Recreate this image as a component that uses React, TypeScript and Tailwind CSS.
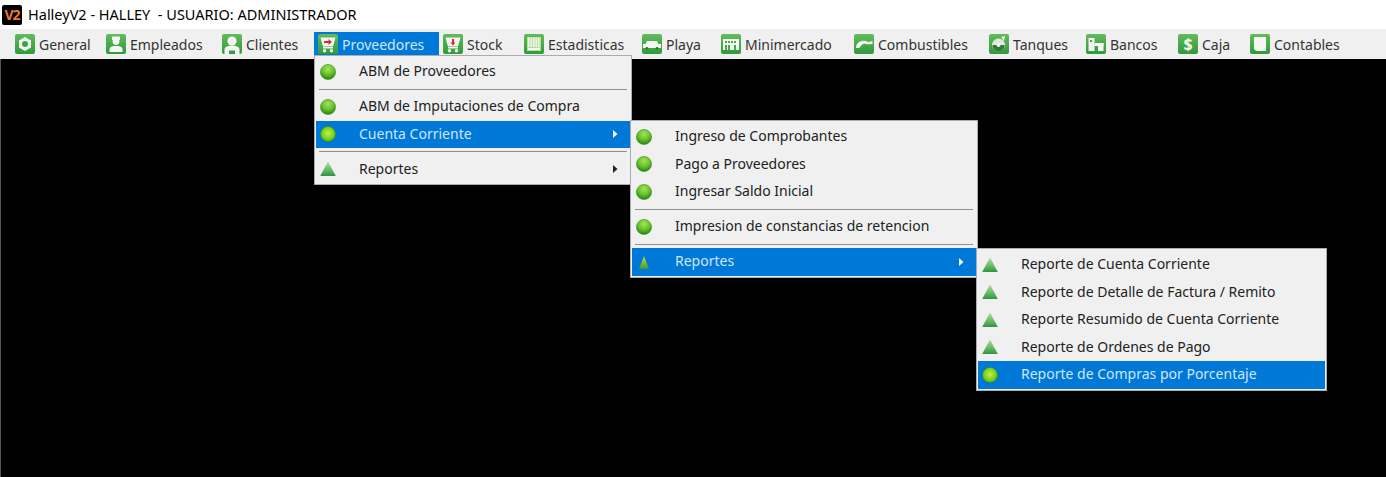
const F = "[font-family:'Noto_Sans','Open_Sans',sans-serif]";

function Ball({ active = false }: { active?: boolean }) {
  const id = active ? "ballA" : "ballN";
  return (
    <svg width="16" height="16" viewBox="0 0 16 16" className="shrink-0">
      <defs>
        <radialGradient id={id} cx="50%" cy={active ? "45%" : "30%"} r="65%">
          <stop offset="0%" stopColor={active ? "#c4f04a" : "#a4e25a"} />
          <stop offset="55%" stopColor={active ? "#7ed321" : "#6cc52c"} />
          <stop offset="100%" stopColor={active ? "#3f9f14" : "#2f8a18"} />
        </radialGradient>
      </defs>
      <ellipse cx="8" cy="8" rx="7.6" ry="7.6" fill={`url(#${id})`} stroke={active ? "#2f8f1d" : "#3b9225"} strokeWidth="0.6" />
    </svg>
  );
}

function Tri({ active = false }: { active?: boolean }) {
  const id = active ? "triA" : "triN";
  return (
    <svg width="16" height="16" viewBox="0 0 16 16" className="shrink-0">
      <defs>
        <linearGradient id={id} x1="0" y1="0" x2="0" y2="1">
          <stop offset="0%" stopColor={active ? "#c9dc4c" : "#b4dca6"} />
          <stop offset="55%" stopColor={active ? "#79b83a" : "#6cbc66"} />
          <stop offset="100%" stopColor={active ? "#3c9a3a" : "#2f9445"} />
        </linearGradient>
      </defs>
      {active ? (
        <path d="M8 2 L13 15 L3 15 Z" fill={`url(#${id})`} />
      ) : (
        <path d="M8 0.5 L15.8 15 L0.2 15 Z" fill={`url(#${id})`} />
      )}
    </svg>
  );
}

const W = "#f4f6f2";

function Glyph({ name }: { name: string }) {
  switch (name) {
    case "general":
      return (
        <>
          <path d="M10 3 L16 6.5 V13.5 L10 17 L4 13.5 V6.5 Z" fill={W} />
          <circle cx="10" cy="10" r="3" fill="#3ea53e" />
        </>
      );
    case "empleados":
      return (
        <>
          <path d="M6 2.5 H14 V6 H6 Z" fill={W} />
          <circle cx="10" cy="7.5" r="3.4" fill={W} />
          <path d="M3.5 18 V15 C3.5 12.5 7 12 10 12 C13 12 16.5 12.5 16.5 15 V18 Z" fill={W} />
        </>
      );
    case "clientes":
      return (
        <>
          <circle cx="10" cy="7" r="4.6" fill={W} />
          <path d="M2.5 20 V15.5 C2.5 12.5 6.5 11.5 10 11.5 C13.5 11.5 17.5 12.5 17.5 15.5 V20 H13 V16.5 H7 V20 Z" fill={W} />
        </>
      );
    case "prov":
    case "stock":
      return (
        <>
          <path d="M2.5 3.5 H17.5 L15 12.5 H5 Z" fill={W} />
          <rect x="5" y="13" width="10" height="1.5" fill={W} />
          <circle cx="6.5" cy="16.8" r="1.7" fill={W} />
          <circle cx="13.5" cy="16.8" r="1.7" fill={W} />
          {name === "prov" ? (
            <path d="M6 7 H10.5 V5 L14 8 L10.5 11 V9 H6 Z" fill="#e02a2a" />
          ) : (
            <path d="M10 11.5 L7.5 8.5 H9 V5 H11 V8.5 H12.5 Z" fill="#e02a2a" />
          )}
        </>
      );
    case "estad":
      return (
        <>
          <rect x="3" y="3" width="14" height="14" fill="#b6dea0" />
          {[4, 6.5, 9, 11.5, 14].map((x) => (
            <rect key={x} x={x} y="3.5" width="1.4" height="9.5" fill={W} />
          ))}
          <rect x="4" y="14" width="12" height="2" fill={W} />
        </>
      );
    case "playa":
      return (
        <>
          <path d="M5 7 H15 L16.5 10 H19 V14 H1 V10 H3.5 Z" fill={W} />
          <circle cx="5" cy="14.5" r="1.4" fill="#2f7a2f" />
          <circle cx="15" cy="14.5" r="1.4" fill="#2f7a2f" />
        </>
      );
    case "mini":
      return (
        <>
          <rect x="2" y="5" width="16" height="11" fill={W} />
          {[4, 7, 10, 13].map((x) => (
            <rect key={x} x={x} y="7" width="2" height="2" fill="#4aa84a" />
          ))}
          {[4, 7, 13].map((x) => (
            <rect key={x} x={x} y="11" width="2" height="5" fill="#4aa84a" />
          ))}
        </>
      );
    case "comb":
      return <path d="M2 13 C3 7 10 5.5 14 8 L18.5 7 V10 L14 10.5 C11 9 8 10 7 12 L5 14 H2 Z" fill={W} />;
    case "tanq":
      return (
        <>
          <circle cx="9.5" cy="11" r="6.5" fill="#dfe9da" />
          <path d="M3.5 11 H15.5 C15.5 15 12.5 17.5 9.5 17.5 C6.5 17.5 3.5 15 3.5 11 Z" fill="#2f7a3a" />
          <circle cx="9.5" cy="11" r="2" fill={W} />
          <path d="M12 3 L16 2 L15 7 Z" fill={W} />
        </>
      );
    case "bancos":
      return (
        <>
          <rect x="2.5" y="4" width="6" height="13" fill={W} />
          <rect x="8.5" y="9" width="9" height="3" fill={W} />
          <rect x="12" y="9" width="5.5" height="8" fill={W} />
          <rect x="4" y="6" width="2" height="2" fill="#4aa84a" />
        </>
      );
    case "caja":
      return null;
    default:
      return <path d="M4 3 H16 V17 H6 L4 15 Z" fill={W} />;
  }
}

function Tile({ name }: { name: string }) {
  const gid = "tileG";
  return (
    <svg width="20" height="20" viewBox="0 0 20 20" className="shrink-0">
      <defs>
        <linearGradient id={gid} x1="0" y1="0" x2="0" y2="1">
          <stop offset="0%" stopColor="#63bb5c" />
          <stop offset="100%" stopColor="#2f9a3c" />
        </linearGradient>
      </defs>
      <rect width="20" height="20" rx="2" fill={`url(#${gid})`} />
      <Glyph name={name} />
    </svg>
  );
}

const bar = [
  { n: "general", t: "General", w: "w-[91px]" },
  { n: "empleados", t: "Empleados", w: "w-[116px]" },
  { n: "clientes", t: "Clientes", w: "w-[96px]" },
  { n: "prov", t: "Proveedores", w: "w-[125px]", on: true },
  { n: "stock", t: "Stock", w: "w-[81px]" },
  { n: "estad", t: "Estadisticas", w: "w-[118px]" },
  { n: "playa", t: "Playa", w: "w-[79px]" },
  { n: "mini", t: "Minimercado", w: "w-[133px]" },
  { n: "comb", t: "Combustibles", w: "w-[135px]" },
  { n: "tanq", t: "Tanques", w: "w-[97px]" },
  { n: "bancos", t: "Bancos", w: "w-[92px]" },
  { n: "caja", t: "Caja", w: "w-[72px]" },
  { n: "cont", t: "Contables", w: "w-[100px]" },
];

type Row = { t?: string; i?: "b" | "t"; on?: boolean; sub?: boolean };

function Menu({ rows, pos, arrow }: { rows: Row[]; pos: string; arrow: string }) {
  return (
    <div className={`absolute ${pos} bg-[#f0f0f0] border border-[#a9acb0] pt-[2px] pb-[1px] px-[1px]`}>
      {rows.map((r, k) =>
        r.t ? (
          <div
            key={k}
            className={`flex items-center h-[27.5px] ${r.on ? "bg-[#0078d7] text-[#cfe6fb]" : "text-[#222]"}`}
          >
            <span className="w-[43px] pl-[4px] flex items-center shrink-0">
              {r.i === "b" ? <Ball active={r.on} /> : <Tri active={r.on} />}
            </span>
            <span className="whitespace-nowrap mt-[-2px]">{r.t}</span>
            {r.sub && (
              <svg width="6" height="10" viewBox="0 0 6 10" className={`ml-auto ${arrow}`}>
                <path d="M1 1 L5.5 5 L1 9 Z" fill={r.on ? "#f4f8fc" : "#222"} />
              </svg>
            )}
          </div>
        ) : (
          <div key={k} className="h-[7.5px] flex items-center px-[3px]">
            <div className="h-px w-full bg-[#8f8f8f]" />
          </div>
        )
      )}
    </div>
  );
}

export default function App() {
  return (
    <div className={`relative flex flex-col h-screen w-[1386px] overflow-hidden bg-black text-[14px] ${F}`}>
      <div className="flex items-center h-[29px] bg-white text-black shrink-0 pl-[2px]">
        <span className="w-[20px] h-[20px] mr-[6px] bg-black rounded-[2px] flex items-center justify-center text-[#f0782a] font-bold text-[14px] tracking-[-1px] leading-none">
          V2
        </span>
        <span className="whitespace-pre text-[14.5px]">HalleyV2 - HALLEY  - USUARIO: ADMINISTRADOR</span>
      </div>
      <div className="flex items-start h-[30px] pl-[15px] bg-[#f0f0f0] shrink-0 text-[#333]">
        {bar.map((b) => (
          <div
            key={b.t}
            className={`relative flex items-center gap-1 h-[20px] mt-[5px] shrink-0 ${b.w} ${b.on ? "text-[#cfe6fb]" : ""}`}
          >
            {b.on && <div className="absolute left-[-4px] right-[4px] top-[-2px] bottom-[-4px] bg-[#0078d7]" />}
            <span className="relative flex items-center gap-1 whitespace-nowrap">
              {b.n === "caja" ? (
                <span className="relative w-[20px] h-[20px]">
                  <Tile name="caja" />
                  <span className="absolute inset-0 flex items-center justify-center text-[#f4f6f2] font-bold text-[16px] leading-none">$</span>
                </span>
              ) : (
                <Tile name={b.n} />
              )}
              {b.t}
            </span>
          </div>
        ))}
      </div>
      <div className="flex-1 bg-black border-l border-[#555]" />
      <Menu
        pos="left-[314px] top-[55px] w-[318px]"
        arrow="mr-[12px]"
        rows={[
          { t: "ABM de Proveedores", i: "b" },
          {},
          { t: "ABM de Imputaciones de Compra", i: "b" },
          { t: "Cuenta Corriente", i: "b", on: true, sub: true },
          {},
          { t: "Reportes", i: "t", sub: true },
        ]}
      />
      <Menu
        pos="left-[630px] top-[120px] w-[348px]"
        arrow="mr-[12px]"
        rows={[
          { t: "Ingreso de Comprobantes", i: "b" },
          { t: "Pago a Proveedores", i: "b" },
          { t: "Ingresar Saldo Inicial", i: "b" },
          {},
          { t: "Impresion de constancias de retencion", i: "b" },
          {},
          { t: "Reportes", i: "t", on: true, sub: true },
        ]}
      />
      <Menu
        pos="left-[976px] top-[248px] w-[351px]"
        arrow="mr-[12px]"
        rows={[
          { t: "Reporte de Cuenta Corriente", i: "t" },
          { t: "Reporte de Detalle de Factura / Remito", i: "t" },
          { t: "Reporte Resumido de Cuenta Corriente", i: "t" },
          { t: "Reporte de Ordenes de Pago", i: "t" },
          { t: "Reporte de Compras por Porcentaje", i: "b", on: true },
        ]}
      />
    </div>
  );
}
